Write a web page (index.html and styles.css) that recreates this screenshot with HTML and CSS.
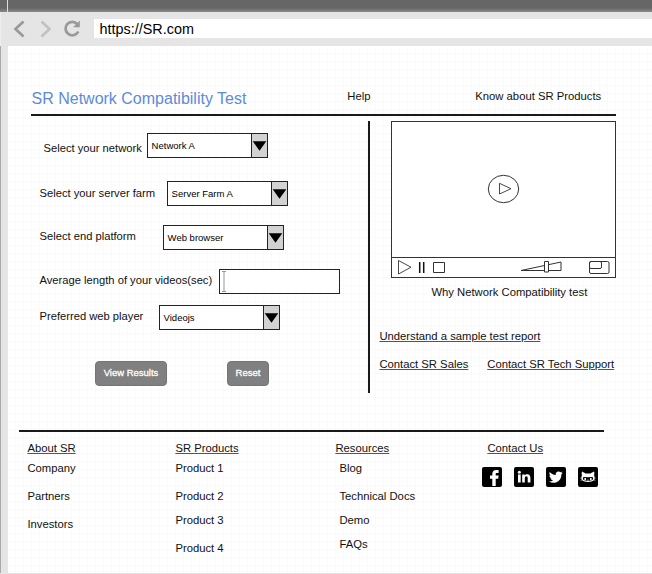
FILE: index.html
```html
<!DOCTYPE html>
<html lang="en">
<head>
<meta charset="utf-8">
<title>SR Network Compatibility Test</title>
<link rel="stylesheet" href="styles.css">
</head>
<body>
<div class="titlebar"></div>
<div class="toolbar">
  <svg class="nav" width="94" height="34" viewBox="0 0 94 34" fill="none">
    <path d="M23.500 9.500 15.500 17l8 7.500" stroke="#999" stroke-width="2.700"/>
    <path d="M41.500 9.500 49.500 17l-8 7.500" stroke="#c2c2c2" stroke-width="2.700"/>
    <path d="M77.300 12.200A6.700 6.700 0 1 0 78.300 19.500" stroke="#999" stroke-width="2.700"/>
    <path d="M79.800 8.500v6.700h-6.700z" fill="#999"/>
  </svg>
  <div class="url">https://SR.com</div>
</div>
<main class="page">
  <header class="head">
    <h1>SR Network Compatibility Test</h1>
    <span class="help">Help</span>
    <span class="know">Know about SR Products</span>
  </header>
  <div class="main">
    <form class="form">
      <div class="row r1"><label>Select your network</label><div class="select"><span>Network A</span><i><svg width="15" height="23"><path d="M.7 7.200h13.600L7.500 16.800z"/></svg></i></div></div>
      <div class="row r2"><label>Select your server farm</label><div class="select"><span>Server Farm A</span><i><svg width="15" height="23"><path d="M.7 7.200h13.600L7.500 16.800z"/></svg></i></div></div>
      <div class="row r3"><label>Select end platform</label><div class="select"><span>Web browser</span><i><svg width="15" height="23"><path d="M.7 7.200h13.600L7.500 16.800z"/></svg></i></div></div>
      <div class="row r4"><label>Average length of your videos(sec)</label><div class="select input"><svg width="5" height="21" fill="none" stroke="#999"><path d="M0 .5h4M2 .5v20M0 20.500h4"/></svg></div></div>
      <div class="row r5"><label>Preferred web player</label><div class="select"><span>Videojs</span><i><svg width="15" height="23"><path d="M.7 7.200h13.600L7.500 16.800z"/></svg></i></div></div>
      <div class="buttons"><button type="button" class="view">View Results</button><button type="button" class="reset">Reset</button></div>
    </form>
    <section class="side">
      <svg class="video" width="225" height="157" viewBox="391 121 225 157" fill="none" stroke="#333">
        <rect x="391.500" y="121.500" width="224" height="156" fill="#fff"/>
        <path d="M391 257.500h225"/>
        <ellipse cx="503.500" cy="189" rx="15.200" ry="13.700"/>
        <path d="M499.500 183.300v10.700l11.500-5.300zM398.500 260.500v13.500l12.500-6.800z" stroke-width=".9"/>
        <path d="M419.700 262v11M423.700 262v11" stroke="#111" stroke-width="1.500"/>
        <path d="M433.500 262.500h11v10h-11zM521 270.500l40-8.500v8.500z"/>
        <path d="M544.500 261.500h4v10.500h-4z" fill="#fff"/>
        <rect x="589.500" y="261.500" width="19.500" height="12" rx="1.500"/>
        <rect x="589.500" y="261.500" width="12" height="7" rx="1.500"/>
      </svg>
      <p class="caption">Why Network Compatibility test</p>
      <p class="sample"><a>Understand a sample test report</a></p>
      <p class="contacts"><a>Contact SR Sales</a><a>Contact SR Tech Support</a></p>
    </section>
  </div>
  <footer class="foot">
    <div class="col about"><a>About SR</a><span>Company</span><span class="far">Partners</span><span class="far">Investors</span></div>
    <div class="col products"><a>SR Products</a><span>Product 1</span><span class="far">Product 2</span><span class="near">Product 3</span><span class="far">Product 4</span></div>
    <div class="col resources"><a>Resources</a><span>Blog</span><span class="far">Technical Docs</span><span class="near">Demo</span><span class="near">FAQs</span></div>
    <div class="col contact"><a>Contact Us</a>
      <div class="social">
        <svg viewBox="0 0 20 20"><rect width="20" height="20" rx="2"/><path fill="#fff" d="M10.300 19v-7.200H8V8.500h2.300V7c0-2.800 1.500-4 4-4h2.300v3h-1.600c-1 0-1.300.5-1.300 1.300v1.200h2.900l-.4 3.300h-2.500V19z"/></svg>
        <svg viewBox="0 0 20 20"><rect width="20" height="20" rx="2"/><path fill="#fff" d="M4 7.500h2.700V15.500H4zM8.200 7.500h2.500v1c.5-.8 1.300-1.300 2.500-1.300 2.300 0 3.200 1.500 3.200 3.700v4.600h-2.700v-4.200c0-1.200-.3-2-1.300-2-1.100 0-1.600.8-1.600 2v4.200H8.200z"/><circle cx="5.350" cy="5.200" r="1.500" fill="#fff"/></svg>
        <svg viewBox="0 0 20 20"><rect width="20" height="20" rx="2"/><path fill="#fff" d="M16.800 5.700c-.5.200-1 .4-1.600.4.600-.3 1-.9 1.200-1.500-.5.300-1.200.6-1.800.7a2.900 2.900 0 0 0-4.900 2.600c-2.400-.1-4.500-1.300-5.900-3-.8 1.300-.4 3 .9 3.800-.5 0-.9-.1-1.300-.3 0 1.400 1 2.600 2.300 2.900-.4.100-.9.100-1.300 0 .4 1.200 1.400 2 2.700 2-1.200 1-2.700 1.400-4.200 1.200 5.500 3.300 12.500.2 12.500-7.300.5-.4 1-.9 1.400-1.500z"/></svg>
        <svg viewBox="0 0 20 20"><rect width="20" height="20" rx="2"/><path fill="#fff" d="M4 4.500l3.700 2h4.600l3.700-2c.5 1.400.4 2.700 0 3.800 1 1.500.6 4-.5 5.300-1.300 1.700-9.700 1.700-11 0-1.100-1.300-1.500-3.800-.5-5.300-.4-1.100-.5-2.400 0-3.800z"/><path d="M5 10.500c1.500-.8 2.500-.2 5-.2s3.500-.6 5 .2c.7 2.400-.8 3.200-5 3.200s-5.700-.8-5-3.200z"/><ellipse cx="7.200" cy="12" rx=".9" ry="1.200" fill="#fff"/><ellipse cx="12.800" cy="12" rx=".9" ry="1.200" fill="#fff"/><path stroke="#fff" stroke-width=".7" d="M9.300 13h1.400M2.500 11l2 .3M2.700 13.300l2-.7M17.500 11l-2 .3M17.300 13.300l-2-.7"/></svg>
      </div>
    </div>
  </footer>
</main>
</body>
</html>
```
FILE: styles.css
```css
* { box-sizing: border-box; }
body {
  margin: 0;
  width: 652px;
  height: 574px;
  overflow: hidden;
  background: #e5e5e5;
  font: 11.28px/14px "Liberation Sans", Arial, sans-serif;
  color: #111;
}
h1, p { margin: 0; font-weight: normal; }
.titlebar {
  height: 12px;
  background: linear-gradient(90deg, transparent 7px, #ddd 7px, #ddd 8px, transparent 8px), linear-gradient(#666 8px, #8b8b8b 12px);
}
.toolbar { display: flex; height: 34px; background: #e5e5e5; border-left: 1px solid #eee; }
.nav { flex: none; margin-left: -1px; }
.url {
  flex: 1;
  height: 19px;
  margin-top: 7px;
  padding-left: 5.5px;
  background: #fff;
  color: #000;
  font-size: 14.4px;
  line-height: 20px;
}
.page {
  height: 527px;
  border-left: 1px solid #aaa;
  padding-left: 6px;
  background:
    linear-gradient(90deg, #e5e5e5 7px, transparent 7px),
    repeating-linear-gradient(90deg, transparent 0 7px, #fafafa 7px 8px) 7px 0,
    repeating-linear-gradient(transparent 0 7px, #fafafa 7px 8px),
    #fff;
}
.head {
  display: flex;
  width: 585px;
  height: 70px;
  margin-left: 24px;
  padding-top: 43px;
  border-bottom: 2px solid #1a1a1a;
  white-space: nowrap;
}
h1 { width: 316px; padding-left: .5px; font-size: 16px; line-height: 20px; color: #5e8bd8; }
.help { width: 128px; padding-left: .3px; }
.know { padding-left: .3px; }
.main { display: flex; height: 314px; }
.form {
  width: 363px;
  height: 277px;
  padding: 17px 0 0 33px;
}
.row { display: flex; width: 301px; height: 25px; line-height: 25px; white-space: nowrap; }
.row label { flex: none; font-size: 11.2px; text-indent: -.5px; }
.r1 { padding-left: 4px; }
.r1 label { width: 103px; padding-top: 3px; }
.r2 { margin-top: 23px; }
.r2 label { width: 127px; }
.r3, .r4 { margin-top: 19px; }
.r3 label { width: 123px; margin-top: -1px; }
.r4 label { width: 179px; margin-top: -1px; }
.r5 { margin-top: 11px; }
.r5 label { width: 119px; margin-top: -1px; }
.select {
  display: flex;
  flex: none;
  width: 121px;
  height: 25px;
  border: 1px solid #222;
  background: #fff;
  font-size: 9.5px;
  line-height: 24px;
  color: #000;
}
.select span { flex: 1; padding-left: 3.6px; }
.select i { width: 16px; border-left: 1px solid #222; background: #d2d2d2; }
.select svg { display: block; }
.input { padding: 1px 2px; }
.buttons { display: flex; margin: 31px 0 0 55px; gap: 60px; }
button {
  height: 25px;
  padding: 0 0 1px;
  border: 1px solid #757575;
  border-radius: 4px;
  background: #808080;
  color: #fff;
  font: 9.5px/22px "Liberation Sans", Arial, sans-serif;
  -webkit-text-stroke: .3px #fff;
}
.view { width: 72px; }
.reset { width: 42px; }
.side { position: relative; width: 250px; height: 272px; margin-top: 5px; margin-left: -2px; border-left: 2px solid #1a1a1a; padding-left: 9.4px; white-space: nowrap; }
.video { display: block; margin-left: 11.6px; }
.caption { margin: 7px 0 0 52px; }
.sample { margin-top: 30px; }
.contacts { display: flex; gap: 19px; margin-top: 14px; }
a { text-decoration: underline; text-decoration-color: #555; text-decoration-thickness: 1px; text-underline-offset: 1px; }
.foot {
  display: flex;
  width: 585px;
  margin-left: 12px;
  padding: 9px 0 0 8.4px;
  border-top: 2px solid #1a1a1a;
  white-space: nowrap;
}
.col { display: flex; flex-direction: column; align-items: flex-start; gap: 6px; }
.far { margin-top: 8px; }
.near { margin-top: 4px; }
.about { width: 148px; }
.products { width: 160px; }
.resources { width: 152px; }
.resources span { margin-left: 4px; }
.social { display: flex; gap: 12px; margin: 6px 0 0 -5px; }
.social svg { display: block; width: 20px; height: 20px; }
```
